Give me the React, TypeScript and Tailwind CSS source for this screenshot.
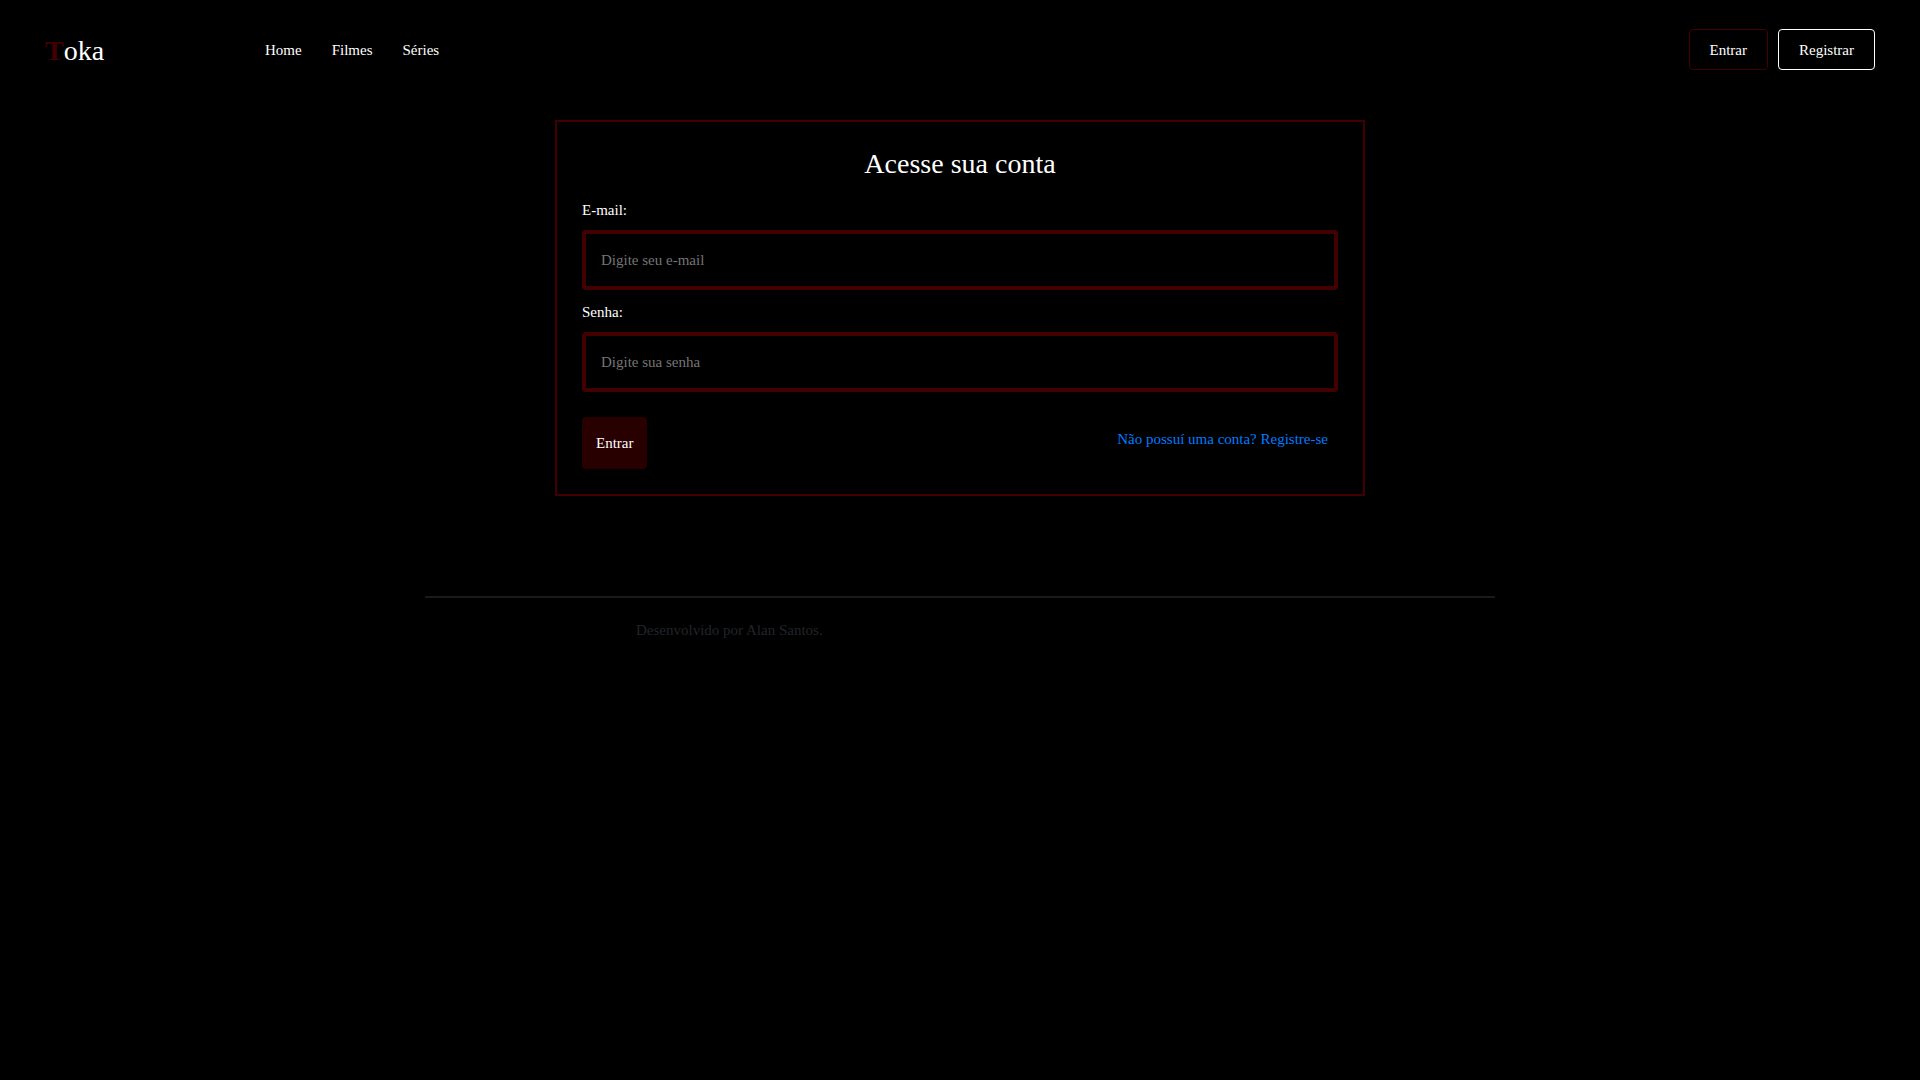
type FieldProps = { id: string; label: string; type: string; placeholder: string };

function Field({ id, label, type, placeholder }: FieldProps) {
  return (
    <div className="mb-2.5 flex flex-col gap-[7px]">
      <label htmlFor={id}>{label}</label>
      <input
        id={id}
        type={type}
        placeholder={placeholder}
        className="h-[60px] w-full rounded border-4 border-[#440000] bg-black px-[15px] text-white outline-none placeholder:text-[#757575]"
      />
    </div>
  );
}

function Header() {
  return (
    <header className="flex h-[99px] items-center px-[45px]">
      <a href="#" className="w-[220px] pt-px text-[28px]">
        <span className="font-bold text-[#440000]">T</span>oka
      </a>
      <nav className="flex flex-1 gap-[30px] pt-0.5">
        <a href="#home">Home</a>
        <a href="#filmes">Filmes</a>
        <a href="#series">Séries</a>
      </nav>
      <div className="flex gap-2.5">
        <button type="button" className="h-[41px] rounded border border-[#440000] px-5 pt-0.5">
          Entrar
        </button>
        <button type="button" className="h-[41px] rounded border border-white px-5 pt-0.5">
          Registrar
        </button>
      </div>
    </header>
  );
}

export default function App() {
  return (
    <div className="min-h-screen bg-black font-['Liberation_Serif',serif] text-[15px] leading-[25px] text-white">
      <Header />
      <main className="mx-auto mt-[21px] max-w-[810px] border-2 border-[#440000] p-[25px]">
        <h1 className="mb-[18px] text-center text-[28px] leading-[33px]">Acesse sua conta</h1>
        <form onSubmit={(e) => e.preventDefault()}>
          <Field id="email" label="E-mail:" type="email" placeholder="Digite seu e-mail" />
          <Field id="senha" label="Senha:" type="password" placeholder="Digite sua senha" />
          <div className="mt-[25px] flex items-start justify-between">
            <button type="submit" className="h-[52px] rounded bg-[#290000] px-3.5">
              Entrar
            </button>
            <a href="#registrar" className="p-2.5 text-[#007bff]">
              Não possuí uma conta? Registre-se
            </a>
          </div>
        </form>
      </main>
      <footer className="mx-auto mt-[100px] max-w-[1070px] border-t-2 border-[#1a1a1a] pt-5 text-[#212529]">
        <p className="pl-[211px]">Desenvolvido por Alan Santos.</p>
      </footer>
    </div>
  );
}
